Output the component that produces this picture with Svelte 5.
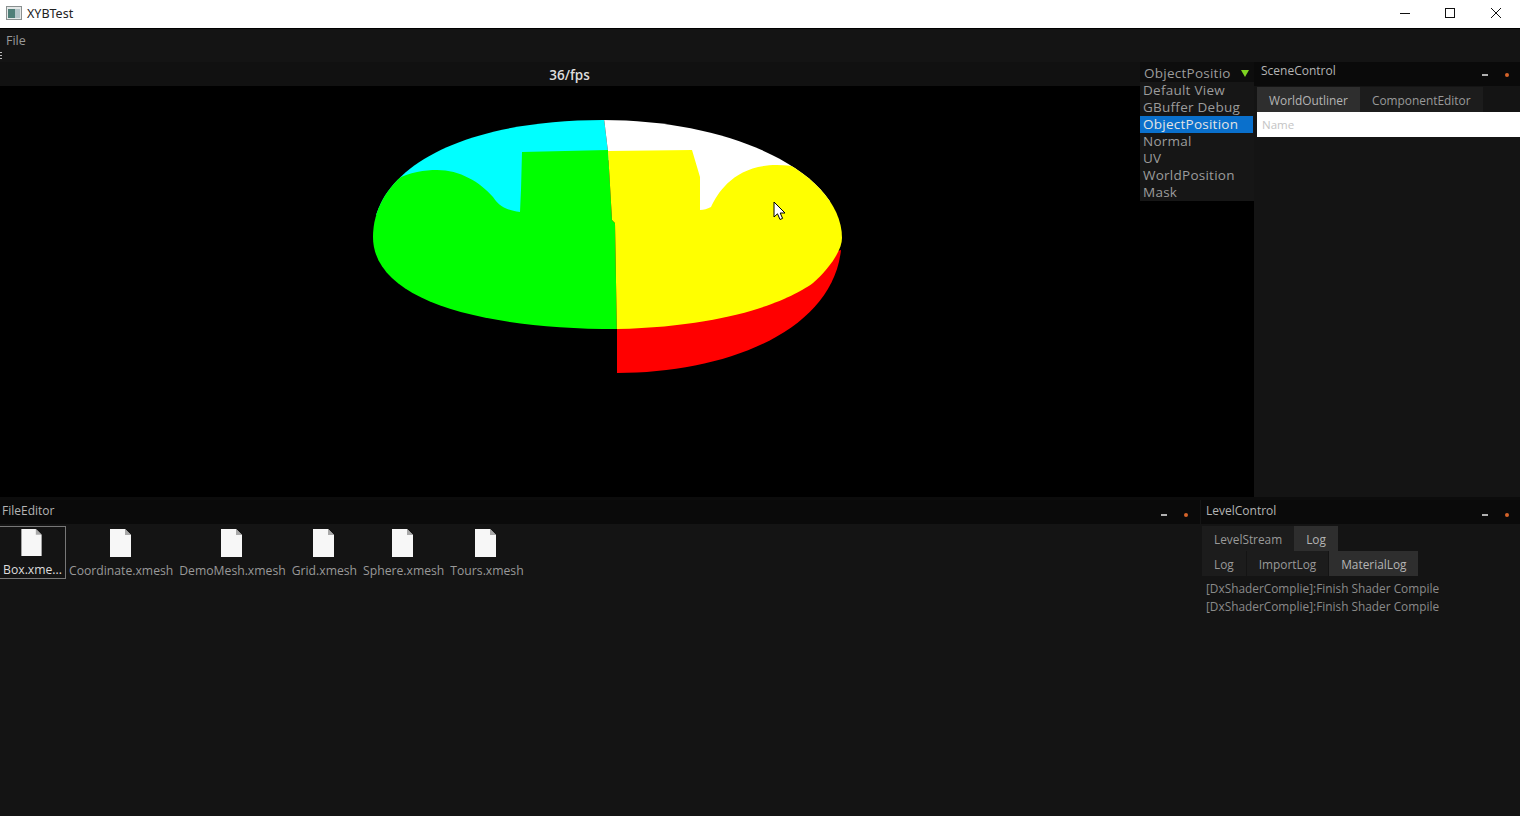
<script>
	const viewModes = ['Default View', 'GBuffer Debug', 'ObjectPosition', 'Normal', 'UV', 'WorldPosition', 'Mask'];
	const files = [
		{ name: 'Box.xme...', selected: true },
		{ name: 'Coordinate.xmesh' },
		{ name: 'DemoMesh.xmesh' },
		{ name: 'Grid.xmesh' },
		{ name: 'Sphere.xmesh' },
		{ name: 'Tours.xmesh' }
	];
</script>

{#snippet panelHead(title)}
	<header class="panel-head">
		<span class="panel-title">{title}</span>
		<span class="panel-btns"><i class="dash"></i><i class="dot"></i></span>
	</header>
{/snippet}

<div class="window">
	<div class="titlebar">
		<svg class="app-icon" width="16" height="14" viewBox="0 0 16 14">
			<rect x="0.5" y="0.5" width="15" height="13" fill="#e4e8e8" stroke="#8a9090" />
			<rect x="2" y="3" width="7" height="9" fill="#4f7f78" />
			<rect x="9" y="3" width="5" height="9" fill="#b4c4c8" />
		</svg>
		<span class="app-name">XYBTest</span>
		<div class="win-btns">
			<svg width="12" height="12" viewBox="0 0 12 12"><path d="M1 6.5h10" stroke="#111" /></svg>
			<svg width="12" height="12" viewBox="0 0 12 12"><rect x="1.5" y="1.5" width="9" height="9" fill="none" stroke="#111" /></svg>
			<svg class="close" width="12" height="12" viewBox="0 0 12 12"><path d="M1 1l10 10M11 1L1 11" stroke="#111" /></svg>
		</div>
	</div>

	<div class="menubar">
		<span class="menu-item">File</span>
		<i class="clipped"></i>
	</div>

	<div class="upper">
		<section class="view">
			<div class="fps">36/fps</div>
			<div class="canvas">
				<svg class="mesh" width="1254" height="411" viewBox="0 86 1254 411">
					<defs>
						<clipPath id="silhouette">
							<path d="M373 237C373 167 465 120 603 120C734 120 842 173 842 238C842 250 830 268 813 283C795 296 740 326 617 329C480 329 373 300 373 237Z" />
						</clipPath>
					</defs>
					<path fill="#ff0000" d="M617 320L841 250C832 332 725 373 617 373Z" />
					<g clip-path="url(#silhouette)">
						<path fill="#00ffff" d="M360 110H603L609 160L520 215H360Z" />
						<path fill="#ffffff" d="M603 110L609 160L640 215H830V110Z" />
						<path fill="#00ff00" d="M370 200L395 180C410 172 425 170 437 170C460 170 480 182 493 197C498 204 503 210 520 212L521 190L522 152L608 150L612 220L615 223L617 340H360Z" />
						<path fill="#ffff00" d="M608 151L692 150L700 177L700 210C704 210 707 209 711 207C718 192 735 165 777 165C792 165 805 168 820 176L860 200V340H617L615 223L612 220Z" />
					</g>
				</svg>
				<svg class="cursor" width="13" height="20" viewBox="0 0 13 20">
					<path d="M1 1v15l3.5-3.2L7 18.5l2.6-1.1-2.4-5.4H12Z" fill="#fff" stroke="#000" />
				</svg>
			</div>
		</section>

		<aside class="scene">
			{@render panelHead('SceneControl')}
			<div class="tabs">
				<span class="tab active">WorldOutliner</span>
				<span class="tab">ComponentEditor</span>
			</div>
			<div class="search">Name</div>
		</aside>

		<div class="combo">
			<div class="combo-head">
				<span>ObjectPositio</span>
				<svg width="8" height="7" viewBox="0 0 8 7"><path d="M0 0h8L4 7Z" fill="#7ed321" /></svg>
			</div>
			<ul class="combo-list">
				{#each viewModes as mode}
					<li class:current={mode === 'ObjectPosition'}>{mode}</li>
				{/each}
			</ul>
		</div>
	</div>

	<div class="lower">
		<section class="file-editor">
			{@render panelHead('FileEditor')}
			<div class="file-grid">
				{#each files as file}
					<div class="file" class:selected={file.selected}>
						<svg width="21" height="28" viewBox="0 0 21 28">
							<path d="M0 0H15L21 6V28H0Z" fill="#f7f7f7" />
							<path d="M15 0L21 6H15Z" fill="#a8a8a8" />
						</svg>
						<span>{file.name}</span>
					</div>
				{/each}
			</div>
		</section>

		<section class="level">
			{@render panelHead('LevelControl')}
			<div class="level-body">
				<div class="tabs small">
					<span class="tab">LevelStream</span>
					<span class="tab active">Log</span>
				</div>
				<div class="tabs small log-tabs">
					<span class="tab">Log</span>
					<span class="tab">ImportLog</span>
					<span class="tab active">MaterialLog</span>
				</div>
				<p class="log">[DxShaderComplie]:Finish Shader Compile</p>
				<p class="log">[DxShaderComplie]:Finish Shader Compile</p>
			</div>
		</section>
	</div>
</div>

<style>
	:global(body) {
		margin: 0;
		background: #141414;
		overflow: hidden;
	}
	.window {
		width: 1520px;
		height: 816px;
		display: flex;
		flex-direction: column;
		font-family: "Open Sans", "Noto Sans", sans-serif;
		font-size: 11.85px;
		color: #a8a8a8;
	}
	.titlebar {
		height: 28px;
		flex: none;
		background: #fff;
		display: flex;
		align-items: center;
		padding: 0 0 2px 6px;
		box-sizing: border-box;
		color: #222;
		font-family: "Noto Sans", sans-serif;
		font-size: 12.5px;
	}
	.app-icon {
		margin-right: 5px;
	}
	.win-btns {
		margin-left: auto;
		margin-right: 18px;
		display: flex;
		gap: 33px;
	}
	.win-btns .close {
		margin-left: 1px;
	}
	.menubar {
		height: 34px;
		flex: none;
		background: #141414;
		border-top: 1px solid #000;
		box-sizing: border-box;
		position: relative;
		padding: 3px 0 0 6px;
		font-size: 12.5px;
	}
	.menu-item {
		color: #999;
	}
	.clipped {
		position: absolute;
		left: 0;
		top: 23px;
		width: 2px;
		height: 8px;
		background: repeating-linear-gradient(#bbb 0 1px, transparent 1px 3px);
	}
	.upper {
		height: 435px;
		flex: none;
		display: flex;
		position: relative;
	}
	.view {
		width: 1254px;
		flex: none;
		display: flex;
		flex-direction: column;
	}
	.fps {
		height: 24px;
		flex: none;
		background: #111;
		text-align: center;
		padding: 1px 115px 0 0;
		box-sizing: border-box;
		line-height: 24px;
		color: #ddd;
		font-size: 13.5px;
		font-weight: 600;
	}
	.canvas {
		flex: 1;
		background: #000;
		position: relative;
	}
	.mesh {
		display: block;
	}
	.cursor {
		position: absolute;
		left: 773px;
		top: 115px;
	}
	.scene {
		flex: 1;
		background: #141414;
		display: flex;
		flex-direction: column;
	}
	.panel-head {
		height: 24px;
		flex: none;
		background: #0a0a0a;
		display: flex;
		align-items: center;
		justify-content: space-between;
		padding: 0 11px 0 2px;
		box-sizing: border-box;
	}
	.scene .panel-head {
		padding-left: 7px;
	}
	.file-editor .panel-head {
		padding-right: 12px;
	}
	.panel-title {
		color: #b4b4b4;
		margin-top: -3px;
		font-size: 12px;
	}
	.scene .panel-title {
		margin-top: -7px;
	}
	.panel-btns {
		display: flex;
		align-items: center;
		gap: 17px;
		margin-top: 5px;
	}
	.scene .panel-btns {
		margin-top: 1px;
	}
	.dash {
		width: 6px;
		height: 2px;
		background: #b0b0b0;
	}
	.dot {
		width: 4px;
		height: 4px;
		border-radius: 50%;
		background: #d5642a;
	}
	.tabs {
		height: 25px;
		flex: none;
		margin-top: 1px;
		display: flex;
		padding-left: 3px;
		font-size: 11.9px;
	}
	.tab {
		padding: 1px 12px 0;
		display: flex;
		align-items: center;
		color: #999;
		background: #1c1c1c;
	}
	.tab.active {
		background: #2e2e2e;
		color: #b4b4b4;
	}
	.search {
		height: 25px;
		flex: none;
		margin-left: 3px;
		background: #fff;
		color: #c4c4c4;
		padding-left: 5px;
		line-height: 25px;
		font-size: 11.5px;
	}
	.combo {
		position: absolute;
		left: 1140px;
		top: 0;
		width: 114px;
		background: #141414;
		font-size: 13.5px;
		letter-spacing: 0.25px;
		color: #9c9c9c;
		line-height: 17px;
	}
	.combo-head {
		height: 20px;
		padding: 3px 5px 0 4px;
		box-sizing: border-box;
		display: flex;
		align-items: center;
		justify-content: space-between;
		background: #0d0d0d;
	}
	.combo-list {
		list-style: none;
		margin: 0;
		padding: 0;
		background: #161616;
	}
	.combo-list li {
		height: 17px;
		padding-left: 3px;
	}
	.combo-list li.current {
		background: #0a70cc;
		color: #e4e4e4;
		margin-right: 1px;
	}
	.lower {
		flex: 1;
		display: flex;
		border-top: 3px solid #0c0c0c;
		gap: 1px;
	}
	.file-editor {
		width: 1200px;
		flex: none;
		background: #141414;
	}
	.level {
		flex: 1;
		background: #141414;
	}
	.level .panel-head {
		padding-left: 5px;
	}
	.file-grid {
		display: flex;
		gap: 6px;
		margin-top: 2px;
		font-size: 12.2px;
	}
	.file {
		height: 53px;
		display: flex;
		flex-direction: column;
		align-items: center;
		box-sizing: border-box;
		flex: none;
		white-space: nowrap;
		color: #999;
		padding-top: 3px;
		gap: 5px;
	}
	.file svg {
		margin-left: -2px;
	}
	.file.selected {
		width: 66px;
		border: 1px solid #777;
		border-left: none;
		color: #ddd;
		padding-top: 2px;
		margin-right: -3px;
	}
	.level-body {
		display: flex;
		flex-direction: column;
	}
	.tabs.small {
		margin-top: 0;
		padding-left: 1px;
		font-size: 11.85px;
	}
	.tabs.log-tabs {
		gap: 1px;
	}
	.level-body .tabs:first-child {
		margin-top: 2px;
	}
	.log {
		margin: 0 0 0 5px;
		height: 18px;
		line-height: 18px;
		color: #8a8a8a;
	}
	.level-body .tabs + .log {
		margin-top: 3px;
	}
</style>
